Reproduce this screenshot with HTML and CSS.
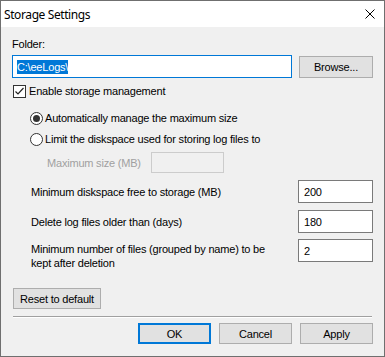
FILE: index.html
```html
<!DOCTYPE html>
<html lang="en">
  <head>
    <meta charset="utf-8" />
    <title>Storage Settings</title>
    <link rel="stylesheet" href="styles.css">
  </head>

  <body>
    <div class="dialog">
      <div class="titlebar">
        <span class="title">Storage Settings</span>
        <svg class="close" width="10" height="10" viewBox="0 0 10 10">
          <path d="M0.5 0.5 L9.5 9.5 M9.5 0.5 L0.5 9.5" stroke="#000" stroke-width="1" fill="none" />
        </svg>
      </div>

      <div class="client">
        <div class="folder-label">Folder:</div>
        <div class="folder-row">
          <div class="textbox focused"><span class="selection">C:\eeLogs\</span></div>
          <div class="btn browse">Browse...</div>
        </div>

        <div class="check-row">
          <span class="checkbox">
            <svg width="11" height="11" viewBox="0 0 11 11">
              <path d="M1.5 5.5 L4 8 L9.5 2" stroke="#222" stroke-width="1.2" fill="none" />
            </svg>
          </span>
          <span>Enable storage management</span>
        </div>

        <div class="radio-row first">
          <span class="radio on"></span>
          <span>Automatically manage the maximum size</span>
        </div>
        <div class="radio-row">
          <span class="radio"></span>
          <span>Limit the diskspace used for storing log files to</span>
        </div>
        <div class="max-row">
          <span class="max-label">Maximum size (MB)</span>
          <span class="textbox disabled"></span>
        </div>

        <!-- numeric settings -->
        <div class="field-row">
          <span class="field-label">Minimum diskspace free to storage (MB)</span>
          <div class="textbox">200</div>
        </div>
        <div class="field-row">
          <span class="field-label">Delete log files older than (days)</span>
          <div class="textbox">180</div>
        </div>
        <div class="field-row tall">
          <span class="field-label">Minimum number of files (grouped by name) to be kept after deletion</span>
          <div class="textbox">2</div>
        </div>

        <div class="btn reset">Reset to default</div>
        <div class="separator"></div>

        <div class="footer">
          <div class="btn default">OK</div>
          <div class="btn">Cancel</div>
          <div class="btn">Apply</div>
        </div>
      </div>
    </div>
  </body>
</html>
```

FILE: styles.css
```css
body {
  margin: 0;
  background: #f0f0f0;
}

.dialog {
  width: 385px;
  height: 357px;
  box-sizing: border-box;
  border: 1px solid #6f6f6f;
  background: #f0f0f0;
  display: flex;
  flex-direction: column;
  font-family: "Liberation Sans", Arial, sans-serif;
  font-size: 11px;
  letter-spacing: -0.2px;
  color: #000;
}

.titlebar {
  height: 26px;
  background: #fff;
  display: flex;
  align-items: center;
  justify-content: space-between;
  padding: 0 9px 0 3px;
}

.title {
  font-family: "Noto Sans", sans-serif;
  font-size: 12px;
  letter-spacing: -0.4px;
}

.close {
  display: block;
}

.client {
  flex: 1;
  display: flex;
  flex-direction: column;
  padding: 9px 11px 0 11px;
}

.folder-label {
  height: 16px;
  line-height: 16px;
}

.folder-row {
  display: flex;
  gap: 7px;
  margin-top: 3px;
  height: 23px;
}

.textbox {
  box-sizing: border-box;
  height: 23px;
  border: 1px solid #7a7a7a;
  background: #fff;
  padding: 0 4px;
  display: flex;
  align-items: center;
}

.folder-row .textbox {
  flex: 1;
}

.textbox.focused {
  border-color: #0078d7;
}

.selection {
  background: #0078d7;
  color: #fff;
  line-height: 14px;
}

.btn {
  box-sizing: border-box;
  height: 21px;
  background: #e1e1e1;
  border: 1px solid #adadad;
  display: flex;
  align-items: center;
  justify-content: center;
}

.browse {
  width: 74px;
  height: 22px;
  margin-top: 1px;
}

.check-row {
  display: flex;
  align-items: center;
  gap: 3px;
  height: 16px;
  margin-top: 5px;
  padding-left: 1px;
}

.checkbox {
  box-sizing: border-box;
  width: 13px;
  height: 13px;
  border: 1px solid #333;
  background: #fff;
}

.checkbox svg {
  display: block;
}

.radio-row {
  display: flex;
  align-items: center;
  gap: 2px;
  height: 16px;
  margin-top: 5px;
  padding-left: 18px;
}

.radio-row.first {
  margin-top: 11px;
}

.radio {
  box-sizing: border-box;
  width: 13px;
  height: 13px;
  border: 1px solid #333;
  border-radius: 50%;
  background: #fff;
  display: flex;
  align-items: center;
  justify-content: center;
}

.radio.on::after {
  content: "";
  width: 7px;
  height: 7px;
  border-radius: 50%;
  background: #333;
}

.max-row {
  display: flex;
  align-items: center;
  height: 21px;
  margin-top: 5px;
  padding-left: 35px;
  color: #a0a0a0;
}

.max-label {
  width: 104px;
}

.textbox.disabled {
  width: 73px;
  height: 21px;
  border-color: #cccccc;
  background: #f0f0f0;
}

.field-row {
  display: flex;
  align-items: center;
  justify-content: space-between;
  height: 23px;
  margin-top: 7px;
  padding-left: 19px;
}

.field-row .textbox {
  width: 75px;
  padding-left: 5px;
}

.field-row.tall {
  align-items: flex-start;
  height: 31px;
  margin-top: 6px;
}

.field-row.tall .field-label {
  width: 250px;
  line-height: 14px;
  padding-top: 3px;
}

.reset {
  align-self: flex-start;
  width: 88px;
  margin-top: 18px;
  margin-left: 1px;
}

.separator {
  margin: 7px 1px 0 1px;
  border-top: 1px solid #a0a0a0;
  border-bottom: 1px solid #fff;
}

.footer {
  display: flex;
  justify-content: flex-end;
  gap: 8px;
  margin-top: 5px;
}

.footer .btn {
  width: 73px;
}

.btn.default {
  border: 2px solid #0078d7;
}
```
